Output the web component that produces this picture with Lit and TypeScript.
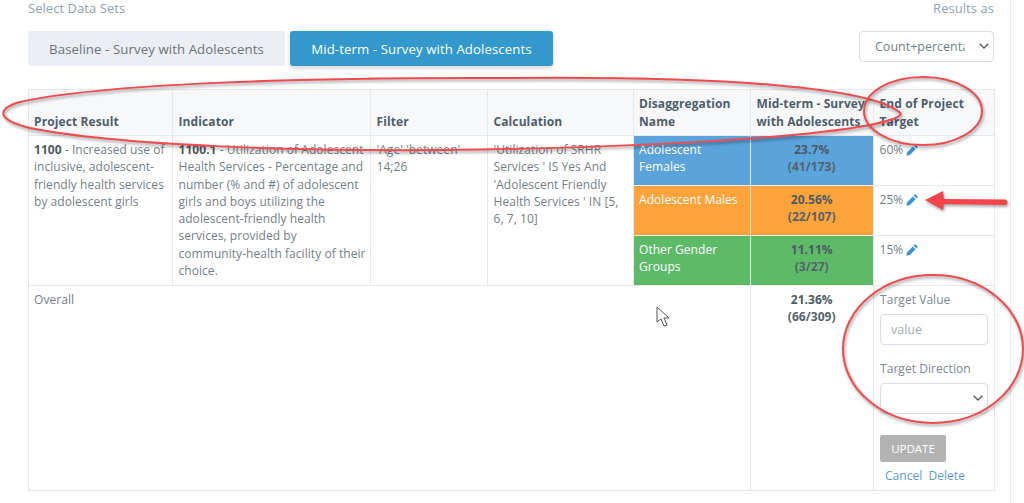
import { LitElement, html, css, svg } from "lit";
import { customElement } from "lit/decorators.js";

const pencil = html`<svg class="pen" viewBox="0 0 12 12" aria-hidden="true"><path d="M8.6 .6 a.8 .8 0 0 1 1.1 0 l1.7 1.7 a.8 .8 0 0 1 0 1.1 l-1 1 -2.8 -2.8z M6.8 2.4 l2.8 2.8 -5.7 5.7 -3.4 .8 .6 -3.4z" fill="#3a96d2"/></svg>`;

const chevron = html`<svg class="chev" viewBox="0 0 10 6" aria-hidden="true"><path d="M.7 .7 L5 5 L9.3 .7" fill="none" stroke="#555" stroke-width="1.3"/></svg>`;

const rows = [
  { name: "Adolescent Females", cls: "blue", pct: "23.7%", n: "(41/173)", target: "60%" },
  { name: "Adolescent Males", cls: "orange", pct: "20.56%", n: "(22/107)", target: "25%" },
  { name: "Other Gender Groups", cls: "green", pct: "11.11%", n: "(3/27)", target: "15%" },
];

@customElement("app-root")
export class AppRoot extends LitElement {
  static styles = css`
    :host {
      display: block;
      position: relative;
      height: 503px;
      width: 1024px;
      overflow: hidden;
      background: #fff;
      font-family: "Open Sans", sans-serif;
      font-size: 12px;
      line-height: 17.3px;
      letter-spacing: 0.05px;
      color: #737f88;
    }
    .page {
      box-sizing: border-box;
      width: 1011px;
      height: 503px;
      padding: 0 16px 0 28px;
      border-right: 1px solid #e8eaec;
    }
    .top {
      display: flex;
      justify-content: space-between;
      align-items: flex-start;
    }
    .label {
      color: #8fa2b0;
      font-size: 13px;
      line-height: 17px;
      margin-bottom: 14px;
    }
    .right {
      display: flex;
      flex-direction: column;
      align-items: flex-end;
    }
    .btns {
      display: flex;
      gap: 5px;
    }
    .btn {
      box-sizing: border-box;
      height: 35px;
      border: 0;
      border-radius: 3px;
      font: 13.2px "Open Sans", sans-serif;
      letter-spacing: 0.1px;
      background: #ebeef2;
      color: #69747c;
      width: 257px;
    }
    .btn.on {
      background: #3399cc;
      color: #fff;
      width: 263px;
      box-shadow: 0 2px 5px rgba(0, 0, 0, 0.18);
    }
    .pick {
      position: relative;
      display: block;
      height: 31px;
    }
    .chev {
      position: absolute;
      right: 5px;
      top: 12px;
      width: 10px;
      height: 6px;
      pointer-events: none;
    }
    select {
      appearance: none;
      -webkit-appearance: none;
    }
    .results {
      box-sizing: border-box;
      display: block;
      width: 135px;
      height: 31px;
      padding: 0 28px 0 15px;
      background: #fff;
      border: 1px solid #d5dde5;
      border-radius: 4px;
      font: 12.5px "Open Sans", sans-serif;
      color: #737f88;
    }
    table {
      border-collapse: collapse;
      table-layout: fixed;
      width: 966px;
      margin-top: 23px;
    }
    th, td {
      border: 1.5px solid #e6e8ea;
      padding: 5px 6px 5px 5.5px;
      vertical-align: top;
      text-align: left;
      box-sizing: border-box;
    }
    th {
      background: #f7f8fa;
      height: 46px;
      vertical-align: bottom;
      color: #4d5e6b;
      font-weight: 700;
      letter-spacing: 0.1px;
      padding-bottom: 5px;
      padding-right: 2px;
      white-space: nowrap;
    }
    td {
      height: 50px;
    }
    .first {
      padding-left: 5px;
    }
    .ind {
      padding-right: 4.5px;
    }
    b {
      color: #4d5a63;
    }
    .tint {
      color: #fff;
      padding-left: 5px;
    }
    .blue { background: #5ba3db; }
    .orange { background: #ffa33a; }
    .green { background: #5dbb68; }
    .val {
      text-align: center;
      color: #4d5a63;
      font-weight: 700;
    }
    .num {
      display: block;
      color: #55636d;
    }
    .target {
      display: flex;
      align-items: center;
      gap: 3px;
    }
    .pen {
      width: 12px;
      height: 12px;
    }
    .overall {
      height: 205px;
    }
    .form {
      display: flex;
      flex-direction: column;
      align-items: flex-start;
      padding-left: 0.5px;
    }
    .form label {
      line-height: 17px;
      margin-bottom: 6px;
      color: #7d8992;
    }
    .input, .dir {
      box-sizing: border-box;
      display: block;
      width: 108px;
      height: 31px;
      border: 1px solid #d5dde5;
      border-radius: 4px;
      background: #fff;
      font: 12.5px "Open Sans", sans-serif;
    }
    .input {
      padding: 0 10px;
      color: #737f88;
      margin-bottom: 15px;
    }
    .input::placeholder {
      color: #a4adb4;
    }
    .update {
      box-sizing: border-box;
      margin-top: 21px;
      width: 66px;
      height: 27px;
      border: 0;
      border-radius: 2px;
      background: #b3b3b3;
      color: #fff;
      font: 11.5px "Open Sans", sans-serif;
    }
    .links {
      display: flex;
      gap: 6px;
      margin: 5px 0 0 5px;
      color: #5b9bd0;
    }
    .marks {
      position: absolute;
      inset: 0;
      width: 1024px;
      height: 503px;
      pointer-events: none;
    }
    .ink {
      fill: none;
      stroke: #f04b4f;
      stroke-width: 2;
      filter: drop-shadow(1px 2px 1.5px rgba(0, 0, 0, 0.4));
    }
    .head {
      fill: #f7434a;
      filter: drop-shadow(1px 2px 1.5px rgba(0, 0, 0, 0.35));
    }
    .cursor {
      fill: #fff;
      stroke: #555;
      stroke-width: 1;
    }
  `;

  render() {
    return html`
      <div class="page">
        <div class="top">
          <div>
            <div class="label">Select Data Sets</div>
            <div class="btns">
              <button class="btn">Baseline - Survey with Adolescents</button>
              <button class="btn on">Mid-term - Survey with Adolescents</button>
            </div>
          </div>
          <div class="right">
            <div class="label">Results as</div>
            <span class="pick"><select class="results"><option>Count+percentage</option></select>${chevron}</span>
          </div>
        </div>
        <table>
          <colgroup>
            <col style="width:144px" /><col style="width:198px" /><col style="width:117px" />
            <col style="width:146px" /><col style="width:117px" /><col style="width:123px" /><col style="width:121px" />
          </colgroup>
          <thead>
            <tr>
              <th class="first">Project Result</th>
              <th>Indicator</th>
              <th>Filter</th>
              <th>Calculation</th>
              <th class="first">Disaggregation<br />Name</th>
              <th>Mid-term - Survey<br />with Adolescents</th>
              <th>End of Project<br />Target</th>
            </tr>
          </thead>
          <tbody>
            ${rows.map(
              (r, i) => html`<tr>
                ${i === 0
                  ? html`<td class="first" rowspan="3"><b>1100</b> - Increased use of inclusive, adolescent-friendly health services by adolescent girls</td>
                      <td class="ind" rowspan="3"><b>1100.1</b> - Utilization of Adolescent Health Services - Percentage and number (% and #) of adolescent girls and boys utilizing the adolescent-friendly health services, provided by community-health facility of their choice.</td>
                      <td rowspan="3">'Age' 'between' 14;26</td>
                      <td rowspan="3">'Utilization of SRHR Services ' IS Yes And 'Adolescent Friendly Health Services ' IN [5, 6, 7, 10]</td>`
                  : ""}
                <td class="tint ${r.cls}">${r.name}</td>
                <td class="val ${r.cls}">${r.pct}<span class="num">${r.n}</span></td>
                <td><div class="target">${r.target} ${pencil}</div></td>
              </tr>`
            )}
            <tr>
              <td class="overall first" colspan="5">Overall</td>
              <td class="val">21.36%<span class="num">(66/309)</span></td>
              <td>
                <div class="form">
                  <label>Target Value</label>
                  <input class="input" placeholder="value" />
                  <label>Target Direction</label>
                  <span class="pick"><select class="dir"><option></option></select>${chevron}</span>
                  <button class="update">UPDATE</button>
                  <div class="links"><span>Cancel</span><span>Delete</span></div>
                </div>
              </td>
            </tr>
          </tbody>
        </table>
      </div>
      <svg class="marks" viewBox="0 0 1024 503" aria-hidden="true">
        ${svg`
          <path class="ink" d="M899 112 C870 88 730 76 512 78 C300 77 100 84 20 102 C-5 109 -2 120 30 128 C120 146 300 151 440 150 C640 148 800 138 870 125 C895 120 905 115 899 112Z"/>
          <ellipse class="ink" cx="923" cy="111" rx="59" ry="34"/>
          <ellipse class="ink" cx="933" cy="349" rx="90" ry="74"/>
          <path class="head" d="M925 200 L943 191 L944 199 L1006 199.5 Q1009 202 1006 205 L944 204 L943 210Z"/>
          <path class="cursor" d="M657 307 L657 322 L661 319 L664 326 L667 325 L664 318 L669 318Z"/>
        `}
      </svg>
    `;
  }
}
